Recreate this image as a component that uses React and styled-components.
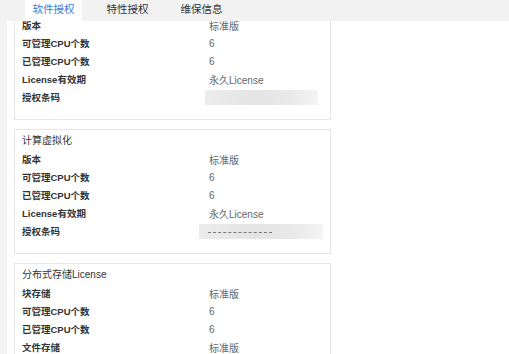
import React, { useLayoutEffect, useRef } from 'react';
import styled, { createGlobalStyle } from 'styled-components';

const GlobalStyle = createGlobalStyle`
  *, *::before, *::after {
    box-sizing: border-box;
  }
  html, body {
    margin: 0;
    padding: 0;
    background: #f3f3f3;
    font-family: Arial, "Liberation Sans", "Noto Sans CJK SC", sans-serif;
  }
`;

const Page = styled.div`
  display: flex;
  flex-direction: column;
  width: 509px;
  height: 354px;
  overflow: hidden;
`;

const TabBar = styled.div`
  display: flex;
  gap: 17px;
  height: 21px;
  padding-left: 25px;
  background: #f2f2f2;
  flex-shrink: 0;
`;

const Tab = styled.div`
  width: 57px;
  line-height: 19px;
  text-align: center;
  font-size: 10.5px;
  color: ${(p) => (p.active ? '#3a7bd5' : '#333')};
  background: ${(p) => (p.active ? '#fff' : 'transparent')};
`;

const Viewport = styled.div`
  flex: 1;
  min-height: 0;
  overflow: hidden;
  padding-left: 7px;
`;

const Panel = styled.div`
  display: flex;
  flex-direction: column;
  gap: 9px;
  background: #fff;
  padding: 1px 0 20px 7px;
  min-height: 100%;
`;

const Card = styled.div`
  width: 317px;
  border: 1px solid #e6e6e6;
  padding: 2px 7px 13px;
`;

const Row = styled.div`
  display: flex;
  align-items: center;
  height: 18px;
  font-size: 10px;
`;

const Title = styled.div`
  height: 18px;
  line-height: 18px;
  font-size: 10px;
  color: #333;
`;

const Label = styled.div`
  width: 187px;
  font-size: 9.5px;
  font-weight: bold;
  color: #333;
`;

const Value = styled.div`
  color: #666;
`;

const Smudge = styled.div`
  position: relative;
  width: ${(p) => p.w}px;
  height: 15px;
  margin-left: ${(p) => p.shift}px;
  background: linear-gradient(90deg, #ececec 0%, #e4e4e4 45%, #e9e9e9 75%, #f4f4f4 100%);
  filter: blur(0.6px);
`;

const Dashes = styled.div`
  position: absolute;
  left: 9px;
  top: 8px;
  width: 64px;
  border-top: 1px dashed #777;
`;

const cards = [
  {
    title: '服务器虚拟化',
    rows: [
      ['版本', '标准版'],
      ['可管理CPU个数', '6'],
      ['已管理CPU个数', '6'],
      ['License有效期', '永久License'],
      ['授权条码', 'smudge1'],
    ],
  },
  {
    title: '计算虚拟化',
    rows: [
      ['版本', '标准版'],
      ['可管理CPU个数', '6'],
      ['已管理CPU个数', '6'],
      ['License有效期', '永久License'],
      ['授权条码', 'smudge2'],
    ],
  },
  {
    title: '分布式存储License',
    rows: [
      ['块存储', '标准版'],
      ['可管理CPU个数', '6'],
      ['已管理CPU个数', '6'],
      ['文件存储', '标准版'],
      ['可管理CPU个数', '6'],
    ],
  },
];

const renderValue = (v) => {
  if (v === 'smudge1') return <Smudge w={113} shift={-4} />;
  if (v === 'smudge2') return <Smudge w={125} shift={-9}><Dashes /></Smudge>;
  return <Value>{v}</Value>;
};

const App = () => {
  const viewRef = useRef(null);

  useLayoutEffect(() => {
    if (viewRef.current) viewRef.current.scrollTop = 27;
  }, []);

  return (
    <Page>
      <GlobalStyle />
      <TabBar>
        <Tab active>软件授权</Tab>
        <Tab>特性授权</Tab>
        <Tab>维保信息</Tab>
      </TabBar>
      <Viewport ref={viewRef}>
        <Panel>
          {cards.map((card, i) => (
            <Card key={i}>
              <Title>{card.title}</Title>
              {card.rows.map(([label, value], j) => (
                <Row key={j}>
                  <Label>{label}</Label>
                  {renderValue(value)}
                </Row>
              ))}
            </Card>
          ))}
        </Panel>
      </Viewport>
    </Page>
  );
};

export default App;
